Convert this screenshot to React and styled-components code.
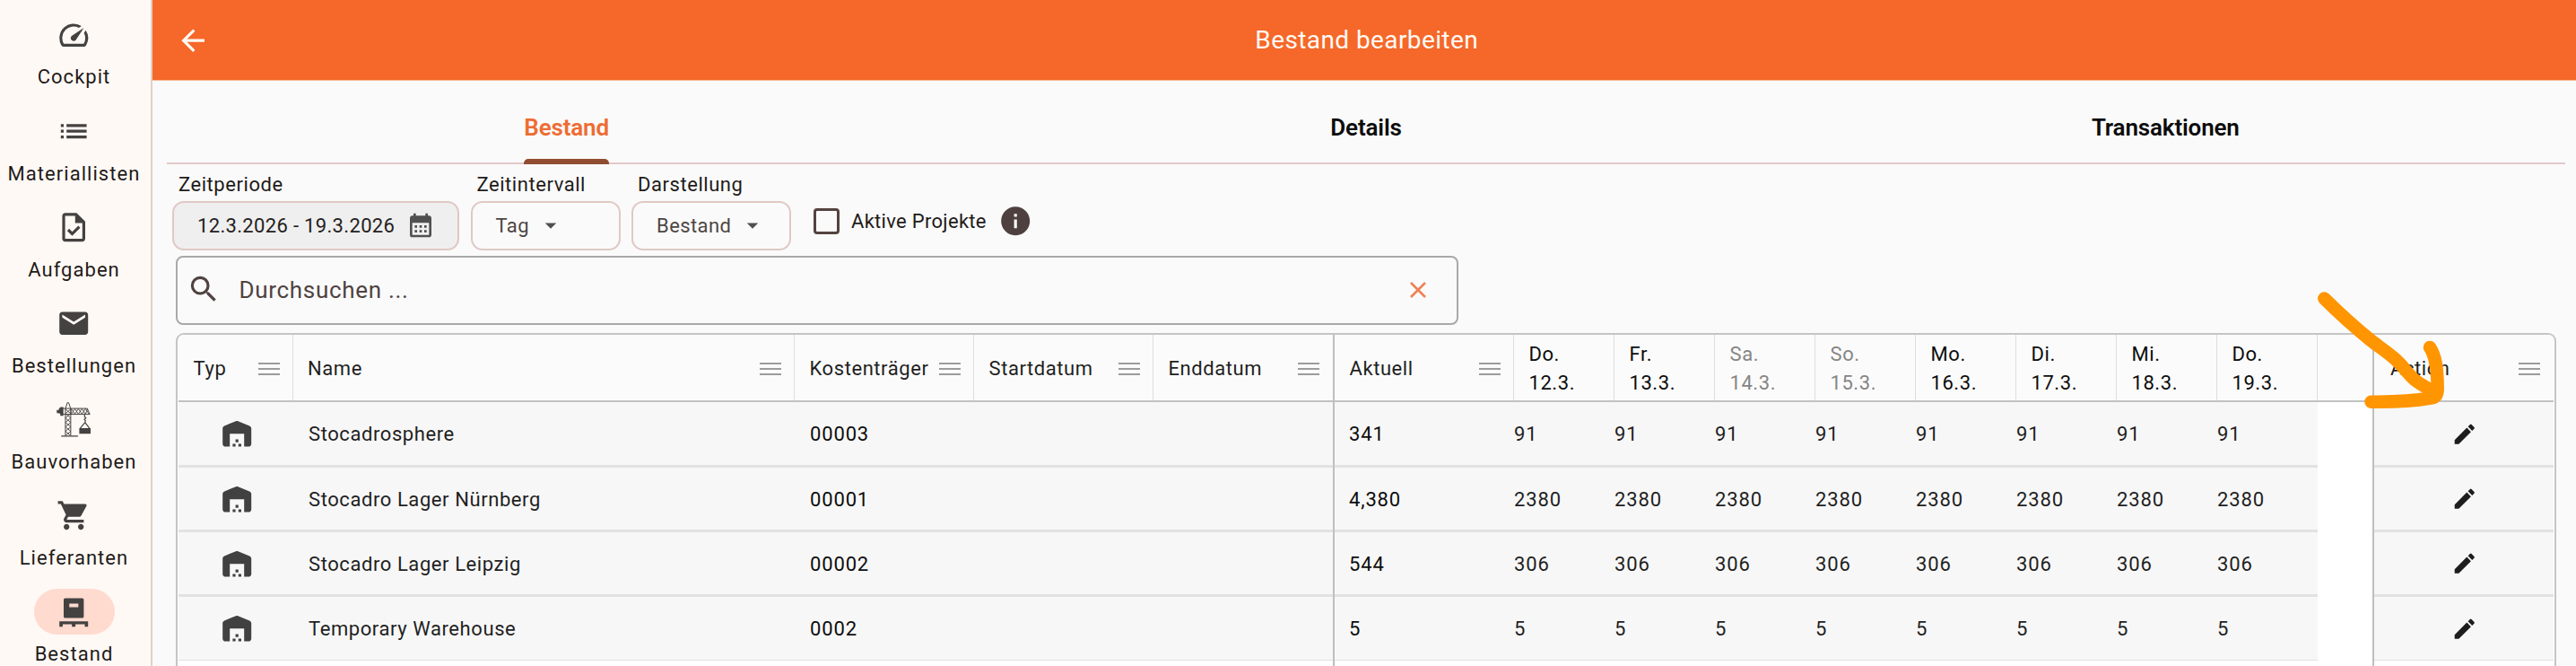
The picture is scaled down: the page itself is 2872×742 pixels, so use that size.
import React from "react";
import styled, { createGlobalStyle } from "styled-components";

const GlobalStyle = createGlobalStyle`
  * { box-sizing: border-box; }
  html, body { margin: 0; padding: 0; height: 100%; overflow: hidden; }
  body { background: #fafafa; color: #1f1b19; font-family: Roboto, "Liberation Sans", sans-serif; font-size: 22px; }
  #root { height: 100%; }
`;

const Page = styled.div`
  position: relative;
  display: flex;
  height: 742px;
  overflow: hidden;
`;

/* ---------- navigation rail ---------- */

const Rail = styled.nav`
  flex: none;
  width: 170px;
  height: 100%;
  padding: 13.4px 3px 0 0;
  border-right: 2px solid #e2d0c6;
  background: #fff9f5;
  display: flex;
  flex-direction: column;
  align-items: center;
  overflow: hidden;
`;

const RailItem = styled.a`
  flex: none;
  height: 107.15px;
  display: flex;
  flex-direction: column;
  align-items: center;
  gap: 9px;
`;

const RailIcon = styled.span`
  width: 90px;
  height: 51px;
  border-radius: 26px;
  display: flex;
  align-items: center;
  justify-content: center;
  color: #444241;
  background: ${(p) => (p.$active ? "#ffdacf" : "transparent")};
`;

const RailLabel = styled.span`
  line-height: 26px;
  letter-spacing: 1.04px;
  white-space: nowrap;
`;

const Svg = styled.svg`
  display: block;
  flex: none;
  width: ${(p) => p.$size || 38.4}px;
  height: ${(p) => p.$size || 38.4}px;
  fill: currentColor;
`;

const PATHS = {
  speed:
    "m20.38 8.57-1.23 1.85a8 8 0 0 1-.22 7.58H5.07A8 8 0 0 1 15.58 6.85l1.85-1.23A10 10 0 0 0 3.35 19a2 2 0 0 0 1.72 1h13.85a2 2 0 0 0 1.74-1 10 10 0 0 0-.27-10.44zm-9.79 6.84a2 2 0 0 0 2.83 0l5.66-8.49-8.49 5.66a2 2 0 0 0 0 2.83z",
  list:
    "M3 13h2v-2H3v2zm0 4h2v-2H3v2zm0-8h2V7H3v2zm4 4h14v-2H7v2zm0 4h14v-2H7v2zM7 7v2h14V7H7z",
  task:
    "M14 2H6c-1.1 0-1.99.9-1.99 2L4 20c0 1.1.89 2 1.99 2H18c1.1 0 2-.9 2-2V8l-6-6zm4 18H6V4h7v5h5v11zM8.82 13.05 7.4 14.46 10.94 18l5.66-5.66-1.41-1.41-4.24 4.24-2.13-2.12z",
  mail:
    "M20 4H4c-1.1 0-1.99.9-1.99 2L2 18c0 1.1.9 2 2 2h16c1.1 0 2-.9 2-2V6c0-1.1-.9-2-2-2zm0 4-8 5-8-5V6l8 5 8-5v2z",
  cart:
    "M7 18c-1.1 0-1.99.9-1.99 2S5.9 22 7 22s2-.9 2-2-.9-2-2-2zM1 2v2h2l3.6 7.59-1.35 2.45c-.16.28-.25.61-.25.96 0 1.1.9 2 2 2h12v-2H7.42c-.14 0-.25-.11-.25-.25l.03-.12.9-1.63h7.45c.75 0 1.41-.41 1.75-1.03l3.58-6.49A1.003 1.003 0 0 0 20 4H5.21l-.94-2H1zm16 16c-1.1 0-1.99.9-1.99 2s.89 2 1.99 2 2-.9 2-2-.9-2-2-2z",
  pallet:
    "M6 2.2h12a1 1 0 0 1 1 1V15a1 1 0 0 1-1 1H6a1 1 0 0 1-1-1V3.2a1 1 0 0 1 1-1zM8.9 6v2.5h6.3V6zM2 18.3h20V22h-2.3v-1.7h-6.5V22h-2.5v-1.7H4.3V22H2z",
  back: "M20 11H7.83l5.59-5.59L12 4l-8 8 8 8 1.41-1.41L7.83 13H20v-2z",
  calendar:
    "M19 4h-1V2h-2v2H8V2H6v2H5c-1.11 0-1.99.9-1.99 2L3 20a2 2 0 0 0 2 2h14c1.1 0 2-.9 2-2V6c0-1.1-.9-2-2-2zm0 16H5V10h14v10zM9 14H7v-2h2v2zm4 0h-2v-2h2v2zm4 0h-2v-2h2v2zm-8 4H7v-2h2v2zm4 0h-2v-2h2v2zm4 0h-2v-2h2v2z",
  caret: "m7 10 5 5 5-5z",
  info:
    "M12 2C6.48 2 2 6.48 2 12s4.48 10 10 10 10-4.48 10-10S17.52 2 12 2zm1 15h-2v-6h2v6zm0-8h-2V7h2v2z",
  search:
    "M15.5 14h-.79l-.28-.27A6.471 6.471 0 0 0 16 9.5 6.5 6.5 0 1 0 9.5 16c1.61 0 3.09-.59 4.23-1.57l.27.28v.79l5 4.99L20.49 19l-4.99-5zm-6 0C7.01 14 5 11.99 5 9.5S7.01 5 9.5 5 14 7.01 14 9.5 11.99 14 9.5 14z",
  warehouse:
    "M22 19V8.35c0-.82-.5-1.55-1.26-1.86l-8-3.2c-.48-.19-1.01-.19-1.49 0l-8 3.2C2.5 6.8 2 7.54 2 8.35V19c0 1.1.9 2 2 2h3v-9h10v9h3c1.1 0 2-.9 2-2zm-11 0H9v2h2v-2zm2-3h-2v2h2v-2zm2 3h-2v2h2v-2z",
  edit:
    "M3 17.25V21h3.75L17.81 9.94l-3.75-3.75L3 17.25zM20.71 7.04a.996.996 0 0 0 0-1.41l-2.34-2.34a.996.996 0 0 0-1.41 0l-1.83 1.83 3.75 3.75 1.83-1.83z",
};

const Icon = ({ name, size }) => (
  <Svg viewBox="0 0 24 24" $size={size} aria-hidden="true">
    <path d={PATHS[name]} />
  </Svg>
);

const CraneIcon = () => (
  <Svg viewBox="0 0 38.4 39" $size={38.4} aria-hidden="true">
    <path d="M0 9h2.500V6.500H4V5.500h3.500v10H4V13H2.500v-.5H0z" />
    <path d="M25.500 29.500h12.800v6.200H25.500zM5 37.800h19v1.200H5z" />
    <g fill="none" stroke="currentColor" strokeWidth="1">
      <path d="M9.800 38V7.500L12 .6h1.400L15.800 7.500V38M7 7.200h27.500L37.500 13.800H7M16 7v7" />
      <path d="M9.800 8l6 5-6 5 6 5-6 5 6 5-6 5M15.800 8l-6 5 6 5-6 5 6 5-6 5 6 5" strokeWidth=".9" />
      <path d="M16.500 13.500l4-6 4 6 4-6 4 6 2.500-6M16.500 7.500l4 6 4-6 4 6 4-6 4 6" strokeWidth=".9" />
      <path d="M31.500 14v2.500l1.500 1.500-1.800 1.500 1.300 1.500-.5 2-5.500 6.500M32 23l5 6.500" strokeWidth="1.200" />
    </g>
  </Svg>
);

/* ---------- main area ---------- */

const Main = styled.main`
  flex: 1;
  min-width: 0;
  display: flex;
  flex-direction: column;
`;

const AppBar = styled.header`
  flex: none;
  height: 90px;
  padding: 1px 59px 0 26px;
  border-bottom: 1px solid #fab894;
  background: #f56829;
  color: #fffaf5;
  display: flex;
  align-items: center;
`;

const AppTitle = styled.h1`
  flex: 1;
  margin: 0;
  font-size: 28px;
  font-weight: 400;
  line-height: 34px;
  letter-spacing: 0.4px;
  text-align: center;
`;

const Tabs = styled.div`
  flex: none;
  height: 93px;
  margin: 0 12px 0 16px;
  display: grid;
  grid-template-columns: repeat(3, 1fr);
  box-shadow: inset 0 -2px 0 #e2c9c8;
`;

const Tab = styled.div`
  display: flex;
  flex-direction: column;
  align-items: center;
  justify-content: flex-end;
  gap: 20px;
  font-size: 26px;
  font-weight: 600;
  letter-spacing: -0.15px;
  line-height: 30px;
  color: ${(p) => (p.$active ? "#ee6c33" : "#0c0c0c")};

  &::after {
    content: "";
    width: 95px;
    height: 6px;
    border-radius: 5px 5px 0 0;
    background: ${(p) => (p.$active ? "#914d31" : "transparent")};
  }
`;

const Filters = styled.div`
  flex: none;
  display: flex;
  align-items: flex-start;
  gap: 12.5px;
  padding: 9px 0 0 22px;
`;

const Field = styled.label`
  width: ${(p) => p.$width}px;
  display: flex;
  flex-direction: column;
  gap: 4px;
`;

const FieldLabel = styled.span`
  padding-left: 7px;
  line-height: 28px;
  letter-spacing: 0.55px;
`;

const FieldBox = styled.span`
  height: 54.500px;
  padding: 0 25px 0 26px;
  border: 2px solid #dfc9c4;
  border-radius: 13px;
  display: flex;
  align-items: center;
  justify-content: ${(p) => (p.$filled ? "space-between" : "flex-start")};
  gap: 8.5px;
  letter-spacing: ${(p) => (p.$filled ? 0.33 : 0.42)}px;
  color: ${(p) => (p.$filled ? "#242120" : "#4e4643")};
  background: ${(p) => (p.$filled ? "#efefef" : "transparent")};
  svg { color: #505050; }
`;

const CheckGroup = styled.div`
  height: 40px;
  margin: 34.500px 0 0 12.500px;
  display: flex;
  align-items: center;
  letter-spacing: 0.3px;
  svg { color: #4e403e; margin-left: 13px; }
`;

const CheckBox = styled.span`
  width: 29px;
  height: 29px;
  margin-right: 13px;
  border: 3px solid #53433f;
  border-radius: 4px;
`;

const SearchBox = styled.div`
  flex: none;
  width: 1430px;
  height: 77px;
  margin: 6.500px 0 0 26px;
  padding: 0 29px 2px 10px;
  border: 2px solid #a9a9a9;
  border-radius: 8px;
  display: flex;
  align-items: center;
  color: #4f4241;
`;

const SearchText = styled.span`
  flex: 1;
  margin-left: 20px;
  font-size: 26px;
  letter-spacing: 0.7px;
`;

const ClearIcon = styled.svg`
  width: 28px;
  height: 28px;
  fill: none;
  stroke: #ef8156;
  stroke-width: 2.6;
`;

/* ---------- table ---------- */

const Table = styled.section`
  flex: 1;
  min-height: 0;
  margin: 9px 22px 0 26px;
  padding: 0 1px;
  border: 2px solid #c5c5c5;
  border-bottom: 0;
  border-radius: 9px 9px 0 0;
  background: #fff;
  display: flex;
  overflow: hidden;
`;

const Pane = styled.div`
  flex: ${(p) => (p.$grow ? "1" : "none")};
  min-width: 0;
  border-right: ${(p) => (p.$pinned === "left" ? "2px solid #bfbfbf" : "0")};
  border-left: ${(p) => (p.$pinned === "right" ? "2px solid #bfbfbf" : "0")};
`;

const HeadRow = styled.div`
  height: 75px;
  display: flex;
  border-bottom: 2px solid #c2c2c2;
  background: #fbfbfb;
`;

const HeadCell = styled.div`
  width: ${(p) => p.$width}px;
  padding: 2px 14px 0 ${(p) => p.$indent || 16.5}px;
  border-right: 1px solid ${(p) => (p.$last ? "transparent" : "#dcdee2")};
  display: flex;
  align-items: center;
  justify-content: space-between;
  line-height: 32px;
  letter-spacing: 0.57px;
  white-space: pre-line;
  color: ${(p) => (p.$muted ? "#858585" : p.$strong ? "#0d0d0d" : "#1f1f1f")};
`;

const MenuBars = styled.span`
  width: 24px;
  height: 14px;
  display: flex;
  flex-direction: column;
  justify-content: space-between;

  &::before, &::after, i { content: ""; height: 2px; background: #9c9c9c; }
`;

const Row = styled.div`
  width: ${(p) => (p.$width ? `${p.$width}px` : "auto")};
  height: 72px;
  display: flex;
  border-bottom: 3px solid #e2e2e2;
  background: #f7f7f7;

  &:nth-child(2) { height: 73px; }
  &:last-child { height: 71px; border-bottom-width: 1px; }
`;

const Cell = styled.div`
  width: ${(p) => p.$width}px;
  padding: 1px 0 0 ${(p) => p.$indent || 0}px;
  display: flex;
  align-items: center;
  justify-content: ${(p) => (p.$center ? "center" : "flex-start")};
  letter-spacing: ${(p) => (p.$digits ? 0.85 : 0.58)}px;
  color: ${(p) => (p.$strong ? "#0d0d0d" : "#1f1f1f")};
  svg { color: ${(p) => (p.$strong ? "#1d1d1d" : "#414141")}; }
`;

const Annotation = styled.svg`
  position: absolute;
  left: 2560px;
  top: 310px;
  width: 180px;
  height: 160px;
  fill: none;
  stroke: #ff9500;
  stroke-width: 14.5;
  stroke-linecap: round;
  stroke-linejoin: round;
`;

const NAV = [
  ["Cockpit", <Icon name="speed" />],
  ["Materiallisten", <Icon name="list" />],
  ["Aufgaben", <Icon name="task" />],
  ["Bestellungen", <Icon name="mail" />],
  ["Bauvorhaben", <CraneIcon />],
  ["Lieferanten", <Icon name="cart" />],
  ["Bestand", <Icon name="pallet" />],
];

const DAYS = [
  ["Do.", "12.3."],
  ["Fr.", "13.3."],
  ["Sa.", "14.3.", true],
  ["So.", "15.3.", true],
  ["Mo.", "16.3."],
  ["Di.", "17.3."],
  ["Mi.", "18.3."],
  ["Do.", "19.3."],
];

const ROWS = [
  { name: "Stocadrosphere", cost: "00003", current: "341", daily: "91" },
  { name: "Stocadro Lager Nürnberg", cost: "00001", current: "4,380", daily: "2380" },
  { name: "Stocadro Lager Leipzig", cost: "00002", current: "544", daily: "306" },
  { name: "Temporary Warehouse", cost: "0002", current: "5", daily: "5" },
];

const Head = ({ title, ...rest }) => (
  <HeadCell {...rest}>
    {title}
    <MenuBars><i /></MenuBars>
  </HeadCell>
);

export default function App() {
  return (
    <Page>
      <GlobalStyle />
      <Rail>
        {NAV.map(([label, icon]) => (
          <RailItem key={label}>
            <RailIcon $active={label === "Bestand"}>{icon}</RailIcon>
            <RailLabel>{label}</RailLabel>
          </RailItem>
        ))}
      </Rail>

      <Main>
        <AppBar>
          <Icon name="back" />
          <AppTitle>Bestand bearbeiten</AppTitle>
        </AppBar>

        <Tabs>
          <Tab $active>Bestand</Tab>
          <Tab>Details</Tab>
          <Tab>Transaktionen</Tab>
        </Tabs>

        <Filters>
          <Field $width={320}>
            <FieldLabel>Zeitperiode</FieldLabel>
            <FieldBox $filled>
              12.3.2026 - 19.3.2026
              <Icon name="calendar" size={32} />
            </FieldBox>
          </Field>
          <Field $width={167}>
            <FieldLabel>Zeitintervall</FieldLabel>
            <FieldBox>
              Tag
              <Icon name="caret" size={30} />
            </FieldBox>
          </Field>
          <Field $width={178}>
            <FieldLabel>Darstellung</FieldLabel>
            <FieldBox>
              Bestand
              <Icon name="caret" size={30} />
            </FieldBox>
          </Field>
          <CheckGroup>
            <CheckBox />
            Aktive Projekte
            <Icon name="info" />
          </CheckGroup>
        </Filters>

        <SearchBox>
          <Icon name="search" />
          <SearchText>Durchsuchen ...</SearchText>
          <ClearIcon viewBox="0 0 28 28">
            <path d="M6 6l16 16M22 6L6 22" />
          </ClearIcon>
        </SearchBox>

        <Table>
          <Pane $pinned="left">
            <HeadRow>
              <Head title="Typ" $width={128} />
              <Head title="Name" $width={559} $indent={16} />
              <Head title="Kostenträger" $width={200} />
              <Head title="Startdatum" $width={200} />
              <Head title="Enddatum" $width={200} $last />
            </HeadRow>
            {ROWS.map((r) => (
              <Row key={r.name}>
                <Cell $width={128} $center $indent={1.5}><Icon name="warehouse" /></Cell>
                <Cell $width={559} $indent={17}>{r.name}</Cell>
                <Cell $width={600} $indent={17} $digits $strong>{r.cost}</Cell>
              </Row>
            ))}
          </Pane>

          <Pane $grow>
            <HeadRow>
              <Head title="Aktuell" $width={200} />
              {DAYS.map(([day, date, muted]) => (
                <HeadCell key={date} $width={112} $muted={muted} $strong>
                  {`${day}\n${date}`}
                </HeadCell>
              ))}
            </HeadRow>
            {ROWS.map((r) => (
              <Row key={r.name} $width={1096}>
                <Cell $width={200} $indent={16} $digits $strong>{r.current}</Cell>
                {DAYS.map(([, date]) => (
                  <Cell key={date} $width={112} $digits>{r.daily}</Cell>
                ))}
              </Row>
            ))}
          </Pane>

          <Pane $pinned="right">
            <HeadRow>
              <Head title="Action" $width={200} $indent={18} $last />
            </HeadRow>
            {ROWS.map((r) => (
              <Row key={r.name}>
                <Cell $width={200} $center $strong $indent={1.5}><Icon name="edit" size={29.5} /></Cell>
              </Row>
            ))}
          </Pane>
        </Table>
      </Main>

      <Annotation viewBox="2560 310 180 160" aria-hidden="true">
        <path d="M2591.300 332.500C2609 350 2627 366 2643 379C2652 386 2660 391 2668 398C2678 406 2684 416 2692 423C2698 428 2704 431 2713 436" />
        <path d="M2709 387C2716 397 2717.500 412 2717.700 433C2717.700 440 2715 443 2710 443.500C2690 447 2670 448 2643.500 447.700" />
      </Annotation>
    </Page>
  );
}
